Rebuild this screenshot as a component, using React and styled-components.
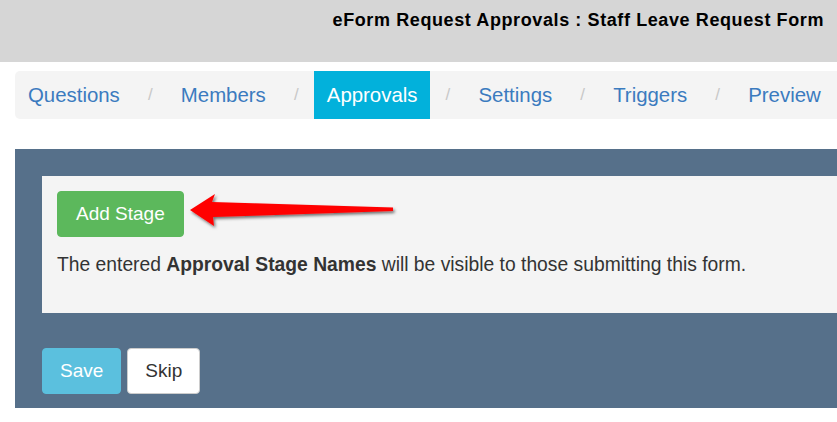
import React from 'react';
import styled, { createGlobalStyle } from 'styled-components';

const GlobalStyle = createGlobalStyle`
  html, body {
    margin: 0;
    padding: 0;
    background: #ffffff;
    overflow-x: hidden;
  }
  body {
    font-family: "Liberation Sans", Arial, sans-serif;
    color: #333333;
  }
`;

const Page = styled.div`
  width: 100%;
  overflow: hidden;
`;

const Header = styled.header`
  height: 62px;
  box-sizing: border-box;
  padding: 10px 13px 0 0;
  background: #d6d6d6;
  text-align: right;
`;

const Title = styled.h1`
  margin: 0;
  font-size: 18px;
  font-weight: 700;
  letter-spacing: 0.6px;
  color: #000000;
`;

const Tabs = styled.nav`
  display: flex;
  align-items: stretch;
  height: 48px;
  margin: 9px -20px 0 15px;
  background: #f4f4f4;
  border-radius: 5px;
`;

const Tab = styled.a`
  display: block;
  padding: 0 13px;
  line-height: 48px;
  font-size: 20.4px;
  white-space: nowrap;
  text-decoration: none;
  color: ${(p) => (p.$active ? '#ffffff' : '#3b7bbf')};
  background: ${(p) => (p.$active ? '#02b1db' : 'transparent')};
`;

const Divider = styled.span`
  display: block;
  width: 35px;
  line-height: 48px;
  text-align: center;
  font-size: 17px;
  color: #c8c8c8;
`;

const Panel = styled.section`
  margin: 30px -20px 0 15px;
  padding: 27px 0 14px 27px;
  background: #56708a;
`;

const Card = styled.div`
  position: relative;
  padding: 15px;
  background: #f4f4f4;
`;

const Button = styled.button`
  height: 46px;
  padding: 0 ${(p) => p.$pad || 18}px;
  border: 1px solid ${(p) => p.$border};
  border-radius: 4px;
  background: ${(p) => p.$bg};
  color: ${(p) => p.$fg};
  font-family: "Liberation Sans", Arial, sans-serif;
  font-size: 19px;
  cursor: pointer;
`;

const Note = styled.p`
  margin: 17px 0 22px;
  font-size: 19.3px;
  color: #333333;

  strong {
    font-weight: 700;
  }
`;

const Actions = styled.div`
  display: flex;
  gap: 6px;
  margin-top: 35px;
`;

const Pointer = styled.svg`
  position: absolute;
  left: 140px;
  top: 10px;
  overflow: visible;
`;

const Arrow = () => (
  <Pointer width="265" height="46" viewBox="0 0 265 46">
    <defs>
      <filter id="arrowShadow" x="-10%" y="-40%" width="120%" height="180%">
        <feDropShadow dx="1.5" dy="2" stdDeviation="1.4" floodColor="#000" floodOpacity="0.55" />
      </filter>
    </defs>
    <polygon
      points="8,24 33,8 30,16 211,21.5 211,25 31,31 32,40"
      fill="#ff0000"
      filter="url(#arrowShadow)"
    />
  </Pointer>
);

const tabs = ['Questions', 'Members', 'Approvals', 'Settings', 'Triggers', 'Preview'];

const App = () => {
  return (
    <Page>
      <GlobalStyle />
      <Header>
        <Title>eForm Request Approvals : Staff Leave Request Form</Title>
      </Header>

      <Tabs>
        {tabs.map((name, i) => (
          <React.Fragment key={name}>
            {i > 0 && <Divider>/</Divider>}
            <Tab href="#" $active={name === 'Approvals'}>{name}</Tab>
          </React.Fragment>
        ))}
      </Tabs>

      <Panel>
        <Card>
          <Button $bg="#5cb85c" $fg="#ffffff" $border="#5cb85c">Add Stage</Button>
          <Arrow />
          <Note>
            The entered <strong>Approval Stage Names</strong> will be visible to those submitting this form.
          </Note>
        </Card>
        <Actions>
          <Button $bg="#5bc0de" $fg="#ffffff" $border="#5bc0de" $pad={17}>Save</Button>
          <Button $bg="#ffffff" $fg="#333333" $border="#cccccc" $pad={17}>Skip</Button>
        </Actions>
      </Panel>
    </Page>
  );
};

export default App;
